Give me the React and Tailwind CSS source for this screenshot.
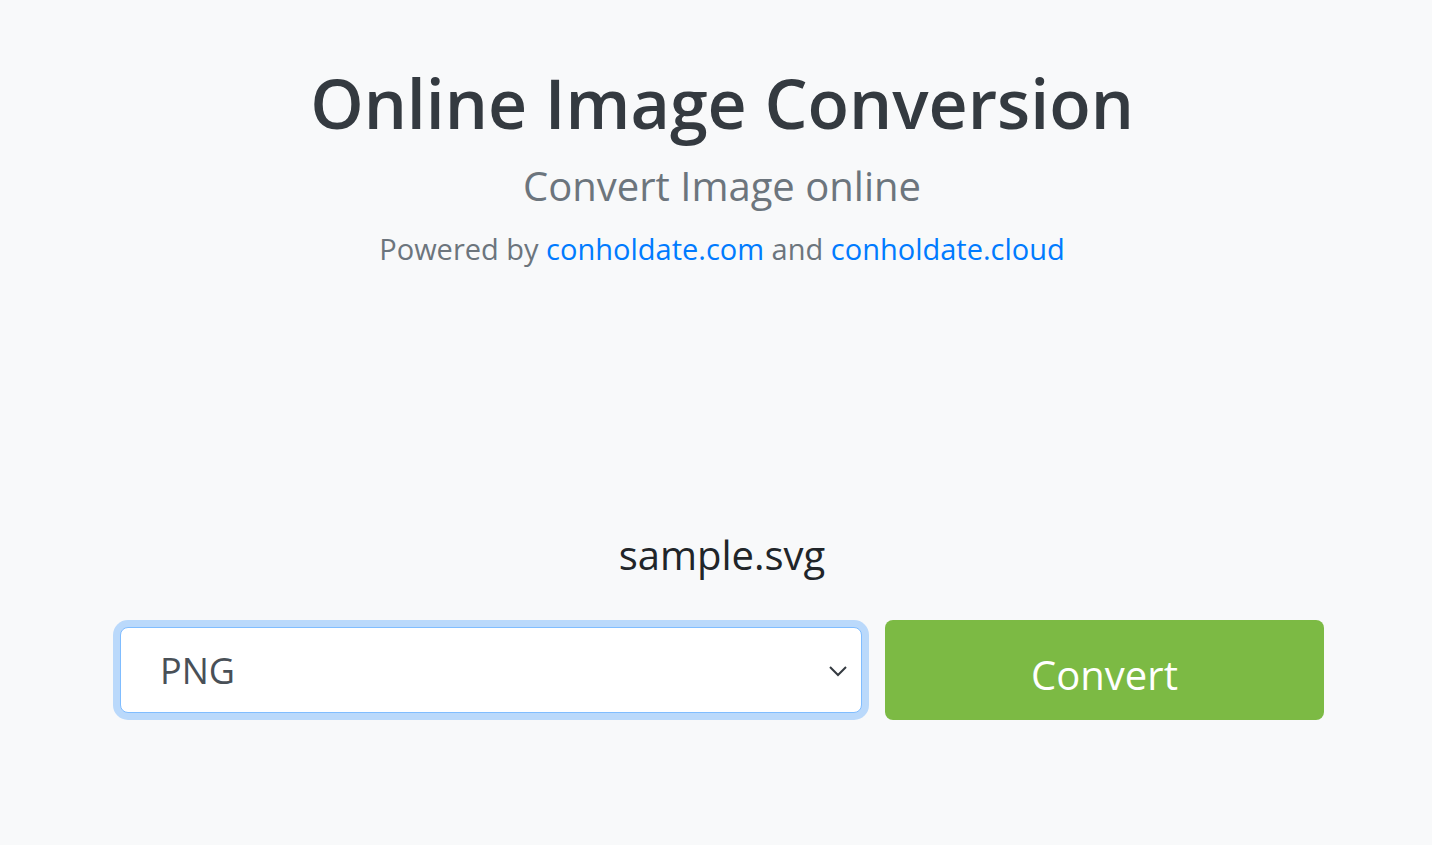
export default function App() {
  return (
    <div
      className="min-h-screen bg-[#f8f9fa] pl-[120px] pr-[108px] pt-[60px]"
      style={{ fontFamily: '"Open Sans", sans-serif' }}
    >
      <div className="text-center">
        <h1 className="text-[68px] leading-[86px] font-semibold text-[#343a40]">Online Image Conversion</h1>
        <p className="mt-[15px] text-[40px] leading-[50px] text-[#6c757d]">Convert Image online</p>
        <p className="mt-[20px] text-[29px] leading-[36px] text-[#6c757d]">
          Powered by <a className="text-[#007bff]">conholdate.com</a> and{' '}
          <a className="text-[#007bff]">conholdate.cloud</a>
        </p>
      </div>

      <div className="mt-[262px] text-center text-[40px] leading-[52px] text-[#212529]">sample.svg</div>

      <div className="mt-[39px] flex items-center gap-[23px]">
        <div className="relative w-[742px] h-[86px] rounded-[8px] border border-[#80bdff] bg-white shadow-[0_0_0_7px_rgba(0,123,255,0.25)] flex items-center">
          <span className="pl-[39px] pt-[2px] text-[36px] text-[#495057]">PNG</span>
          <svg className="absolute right-[13px] top-[37px]" width="20" height="12" viewBox="0 0 20 12" fill="none">
            <path d="M2 2l8 8 8-8" stroke="#343a40" strokeWidth="2" />
          </svg>
        </div>
        <button className="w-[439px] h-[100px] pt-[10px] rounded-[8px] bg-[#7cba44] text-white text-[40px]">Convert</button>
      </div>
    </div>
  );
}
